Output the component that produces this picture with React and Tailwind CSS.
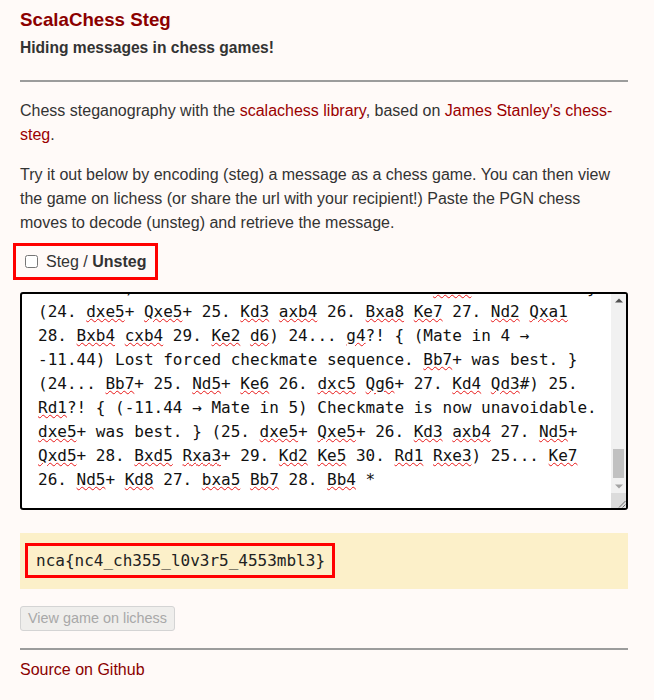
import React, { useLayoutEffect, useRef } from "react";

const filler = [
  '[Event "Casual game"]',
  '[Site "https://lichess.org/"]',
  '[Date "????.??.??"]',
  '[Round "?"]',
  '[White "?"]',
  '[Black "?"]',
  '[Result "*"]',
  '[Annotator "lichess.org"]',
  '',
  '1. e3 e5 2. Nc3 Nf6 3. a3 d5 4. b4 c5 5. Bb2 Nc6 6. Nf3',
  'e4 7. Nd4 Nxd4 8. exd4 cxd4 9. Ne2 d3?! { (0.35 → 1.12)',
  'Inaccuracy. Bd6 was best. } (9... Bd6 10. Nxd4 O-O 11.',
  'Be2 Qc7 12. O-O a5) 10. cxd3 exd3 11. Nd4 Bd6 12. Qb3',
  'O-O 13. Bxd3 Re8+ 14. Kd1 Ng4?? { (0.80 → 3.41)',
  'Blunder. Bg4+ was best. } (14... Bg4+ 15. Kc2 Rc8+ 16.',
  'Kb1 a5 17. h3 Bh5) 15. Nf5 Bf4 16. Qxd5 Qxd5 17. Nh6+',
  'Kf8 18. Nxg4 Bxg4+ 19. f3 Bd7 20. Kc2 Rac8+ 21. Kb3',
  'Be6+ 22. Bc4 Bxc4+ 23. Kxc4 Rc8+?! { (-0.95 → 0.10)',
  'Inaccuracy. b5+ was best. } (23... b5+ 24. Kxb5 Rb8+',
  '25. Ka4 Qd7+ 26. Ka5 Qb5#) 24. Kd3 Qd5 25. Ke2 Qxg2+',
  '26. Kd1 Qxf3+ 27. Kc2 Qe2+ 28. Kb3 Qd3+ 29. Ka4 b5+ 30.',
  'Kxb5 Rb8+ 31. Ka5 Qd5+ 32. Ka6 Qc6+ 33. Ka5 Qc7+ 34.',
  'Ka6 Rb6+ 35. Ka5 Qc6 { (-5.20 → -3.10) Mistake. Ra6#',
  'was best. } (35... Ra6#) 36. d5 Qxd5+ 37. Ka4 Qc4+ 38.',
  'Ka5 Rb5+ 39. Ka6 Qc6+ 40. Ka7 Ra5+ 41. Bxa5 Qc5+ 42.',
  'Kb8 Qxa5 43. Rc1 Qb6+ 44. Ka8 Be5 45. d4 Bxd4 46. Rc8+',
  'Ke7 47. Rc7+ Kd6 48. Rxa7 Qb7# { (Mate in 1) } (48...',
  'Bb6 49. Ra6 Qb7#) *',
  '',
  '{ Variation: } 1. e3 e5 2. Nc3 Nf6 3. a3 d5 4. b4 c5 5.',
  'Bb2 Nc6 6. Nf3 e4 7. Nd4 Nxd4 8. exd4 cxd4 9. Ne2 Bd6',
  '10. Nxd4 O-O 11. Be2 Qc7 12. O-O a5 13. c4 axb4 14.',
  'axb4 dxc4 15. Nb5 Qe7 16. Nxd6 Qxd6 17. Bxf6 Qxf6 18.',
  'Bxc4 Qg6 19. f4 exf3 20. Qxf3 Bh3 21. Rf2 Rxa1+ 22.',
  'Bxa1 Bg4 23. Qe3 Re8 24. Qd4?! { (0.10 → -0.60)',
  'Inaccuracy. Qf4 was best. } (24. Qf4 Be6 25. Bxe6 Rxe6',
  '26. d4 h6) 24... Be6 25. Bxe6 Rxe6 26. Qd8+ Kh7 27. Qd3',
  'Rd6 28. Qxg6+ Kxg6 29. Kf1 Rb6 30. Rb2 f6 31. d4 Kf5',
  '32. Ke2 Ke4 33. Kd2 Kxd4 34. Kc2 Kc4 35. Kb1 Rd6 36.',
  'Ka2 Rd1 37. Rb1 Rd2+ 38. Rb2 Rxb2+ 39. Kxb2 Kxb4 40.',
  'Kc2 Ka3 41. Kc3 b5 42. Kd4 b4 43. Ke4 b3 44. Kf5 b2 45.',
  'Kg6 b1=Q+ 46. Kxg7 Qb7+ 47. Kh6 f5 48. Kh5 f4 49. Kg5',
  'f3 50. Kf4 Qf7 51. Ke3 f2 52. Ke2 f1=Q+ 53. Kd2 Qf4+',
  '54. Kc2 Qc4+ 55. Kd2 Qd4+ 56. Ke2 Qf2+ 57. Kd1 Qdd2#',
  '{ (Mate in 1) Checkmate. } (19... Kf8 20. Qe2 h6 21.',
  'Rf2 Kg8 22. Be5 Rxe5 23. Qf1 Bd7 24. Qe2 Rae8 { (-11.44',
  '→ Mate in 4) Checkmate is now unavoidable. dxe5 was best. }',
];

const visible = [
  'Mate in 4) Checkmate is now unavoidable. dxe5+ was best. }',
  '(24. dxe5+ Qxe5+ 25. Kd3 axb4 26. Bxa8 Ke7 27. Nd2 Qxa1',
  '28. Bxb4 cxb4 29. Ke2 d6) 24... g4?! { (Mate in 4 →',
  '-11.44) Lost forced checkmate sequence. Bb7+ was best. }',
  '(24... Bb7+ 25. Nd5+ Ke6 26. dxc5 Qg6+ 27. Kd4 Qd3#) 25.',
  'Rd1?! { (-11.44 → Mate in 5) Checkmate is now unavoidable.',
  'dxe5+ was best. } (25. dxe5+ Qxe5+ 26. Kd3 axb4 27. Nd5+',
  'Qxd5+ 28. Bxd5 Rxa3+ 29. Kd2 Ke5 30. Rd1 Rxe3) 25... Ke7',
  '26. Nd5+ Kd8 27. bxa5 Bb7 28. Bb4 *',
];

const lines = [...filler.slice(filler.length - 47, filler.length - 1), ...visible];

function Line({ text }) {
  const parts = text.split(/([A-Za-z]+\d[A-Za-z0-9]*)/);
  return (
    <div className="whitespace-pre h-[24px]">
      {text === "" ? " " : parts.map((p, i) =>
        i % 2 === 1 ? (
          <span
            key={i}
            className="underline decoration-wavy decoration-[#e81818] decoration-1 underline-offset-[1px]"
          >
            {p}
          </span>
        ) : (
          <span key={i}>{p}</span>
        )
      )}
    </div>
  );
}

function Scrollbar() {
  return (
    <div className="absolute right-0 top-0 flex h-full w-[15px] flex-col bg-[#f1f1f1]">
      <div className="flex h-[15px] items-center justify-center pb-[2px]">
        <svg width="8" height="5" viewBox="0 0 8 5">
          <polygon points="0,4.5 4,0.5 8,4.5" fill="#505050" />
        </svg>
      </div>
      <div className="flex flex-1 flex-col justify-end">
        <div className="mx-[2px] h-[29px] bg-[#c1c1c1]" />
      </div>
      <div className="flex h-[15px] items-center justify-center pt-[1px]">
        <svg width="8" height="5" viewBox="0 0 8 5">
          <polygon points="0,0.5 4,4.5 8,0.5" fill="#a3a3a3" />
        </svg>
      </div>
      <div className="h-[15px] bg-[#dcdcdc]">
        <svg width="15" height="15" viewBox="0 0 15 15">
          <line x1="8" y1="14.5" x2="14.5" y2="8" stroke="#6e6e6e" strokeWidth="1" />
          <line x1="11.5" y1="14.5" x2="14.5" y2="11.5" stroke="#6e6e6e" strokeWidth="1" />
        </svg>
      </div>
    </div>
  );
}

export default function App() {
  const ref = useRef(null);
  useLayoutEffect(() => {
    if (ref.current) ref.current.scrollTop = ref.current.scrollHeight;
  }, []);

  return (
    <div className="min-h-[700px] bg-[#fffaf8] text-[#333] font-['Liberation_Sans',Arial,sans-serif] text-[16px] overflow-hidden">
      <div className="ml-[20px] w-[608px] pt-[9px]">
        <div className="text-[18.72px] leading-[22px] font-bold text-[#8b0000]">
          ScalaChess Steg
        </div>
        <div className="mt-[5px] text-[15.6px] leading-[24px] font-bold text-[#333]">
          Hiding messages in chess games!
        </div>
        <div className="mt-[20px] h-0 border-t-2 border-[#9c9c9c]" />
        <p className="mt-[17px] leading-[24px]">
          Chess steganography with the{" "}
          <span className="text-[#9b0000]">scalachess library</span>, based on{" "}
          <span className="text-[#9b0000]">James Stanley's chess-steg</span>.
        </p>
        <p className="mt-[16px] leading-[24px]">
          Try it out below by encoding (steg) a message as a chess game. You can then view
          the game on lichess (or share the url with your recipient!) Paste the PGN chess
          moves to decode (unsteg) and retrieve the message.
        </p>
        <div className="mt-[8px] -ml-[7px] inline-flex h-[37px] items-center border-[3px] border-[#ff0000] pl-[9px] pr-[9px]">
          <input type="checkbox" className="m-0 h-[13px] w-[13px]" />
          <span className="ml-[8px] leading-[24px]">
            Steg / <b>Unsteg</b>
          </span>
        </div>
        <div className="relative mt-[12px] h-[218px] w-[608px] overflow-hidden rounded-[3px] border-2 border-black bg-white">
          <div
            ref={ref}
            className="h-full overflow-hidden p-[16px] pr-[31px] font-['DejaVu_Sans_Mono',monospace] text-[16px] leading-[24px] text-[#111]"
          >
            {lines.map((l, i) => (
              <Line key={i} text={l} />
            ))}
          </div>
          <Scrollbar />
        </div>
        <div className="mt-[23px] h-[56px] bg-[#fcf0c9] pt-[10px] pl-[5px]">
          <div className="inline-flex h-[35px] items-center border-[3px] border-[#ff0000] pl-[8px] pr-[7px] font-['DejaVu_Sans_Mono',monospace] text-[16px] text-[#222]">
            nca{"{"}nc4_ch355_l0v3r5_4553mbl3{"}"}
          </div>
        </div>
        <div className="mt-[17px]">
          <button
            disabled
            className="h-[25px] px-[7px] border border-[#d4d4d4] rounded-[3px] bg-[#efeeec] text-[#a8a8a8] text-[14.4px] font-['Liberation_Sans',Arial,sans-serif]"
          >
            View game on lichess
          </button>
        </div>
        <div className="mt-[17px] h-0 border-t-2 border-[#9c9c9c]" />
        <div className="mt-[8px] leading-[24px] text-[#8b0000]">Source on Github</div>
      </div>
    </div>
  );
}
